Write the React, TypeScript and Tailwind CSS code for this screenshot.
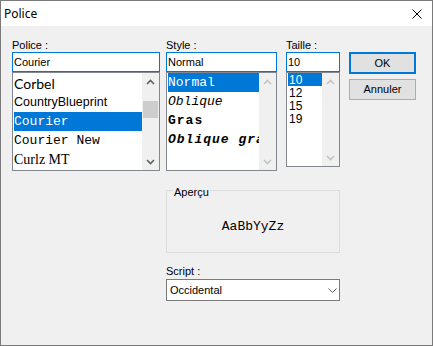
import React from "react";

const Chevron = ({ up, enabled }: { up?: boolean; enabled?: boolean }) => (
  <svg width="9" height="6" viewBox="0 0 9 6">
    <path
      d={up ? "M1 5 L4.5 1.5 L8 5" : "M1 1 L4.5 4.5 L8 1"}
      fill="none"
      stroke={enabled ? "#606060" : "#c4c4c4"}
      strokeWidth="1.6"
    />
  </svg>
);

const ScrollBar = ({ enabled, thumb }: { enabled?: boolean; thumb?: boolean }) => (
  <div className="flex w-[17px] shrink-0 flex-col bg-[#f0f0f0]">
    <div className="flex h-[17px] items-center justify-center">
      <Chevron up enabled={enabled} />
    </div>
    <div className="flex-1">
      {thumb && <div className="mx-[1px] mt-[11px] h-[17px] bg-[#cdcdcd]" />}
    </div>
    <div className="flex h-[17px] items-center justify-center">
      <Chevron enabled={enabled} />
    </div>
  </div>
);

const TextBox = ({ value }: { value: string }) => (
  <div className="flex h-[20px] items-center border border-[#0078d7] bg-white px-[1px]">
    {value}
  </div>
);

const fonts = [
  { name: "Corbel", cls: "font-['Lato',sans-serif] text-[14px]" },
  { name: "CountryBlueprint", cls: "font-['Liberation_Sans',sans-serif] text-[12.5px]" },
  { name: "Courier", cls: "font-['Liberation_Mono',monospace] text-[13px]", selected: true },
  { name: "Courier New", cls: "font-['Liberation_Mono',monospace] text-[13px]" },
  { name: "Curlz MT", cls: "font-['Liberation_Serif',serif] text-[14px]" },
];

const styles = [
  { name: "Normal", cls: "", selected: true },
  { name: "Oblique", cls: "italic" },
  { name: "Gras", cls: "font-bold tracking-[1px]" },
  { name: "Oblique gras", cls: "italic font-bold tracking-[1px]" },
];

const sizes = ["10", "12", "15", "19"];

export default function App() {
  return (
    <div className="flex h-[346px] w-[433px] flex-col overflow-hidden border border-[#7a7a7a] bg-[#f0f0f0] font-['Liberation_Sans',sans-serif] text-[11px] text-black">
      <div className="flex h-[25px] shrink-0 items-center justify-between bg-white pl-[3px] pr-[10px]">
        <span className="font-['Segoe_UI','Noto_Sans',sans-serif] text-[12px]">Police</span>
        <svg width="10" height="10" viewBox="0 0 10 10">
          <path d="M0.5 0.5 L9.5 9.5 M9.5 0.5 L0.5 9.5" stroke="#000" strokeWidth="1" />
        </svg>
      </div>

      <div className="flex flex-col pl-[11px] pt-[12px]">
        <div className="flex">
          {/* Police */}
          <div className="flex w-[148px] flex-col">
            <div className="h-[14px] leading-[14px]">Police :</div>
            <TextBox value="Courier" />
            <div className="flex h-[99px] border border-[#828790] bg-white">
              <div className="flex-1 overflow-hidden pl-[1px] pt-[1px]">
                {fonts.map((f) => (
                  <div
                    key={f.name}
                    className={`flex h-[19px] items-center whitespace-nowrap ${f.cls} ${
                      f.selected ? "bg-[#0078d7] text-white" : ""
                    }`}
                  >
                    {f.name}
                  </div>
                ))}
              </div>
              <ScrollBar enabled thumb />
            </div>
          </div>

          {/* Style */}
          <div className="ml-[6px] flex w-[111px] flex-col">
            <div className="h-[14px] leading-[14px]">Style :</div>
            <TextBox value="Normal" />
            <div className="flex h-[99px] border border-[#828790] bg-white">
              <div className="min-w-0 flex-1 overflow-hidden pl-[1px]">
                {styles.map((s) => (
                  <div
                    key={s.name}
                    className={`flex h-[19px] items-center overflow-hidden whitespace-nowrap font-['Liberation_Mono',monospace] text-[13px] ${s.cls} ${
                      s.selected ? "bg-[#0078d7] text-white" : ""
                    }`}
                  >
                    {s.name}
                  </div>
                ))}
              </div>
              <ScrollBar />
            </div>
          </div>

          {/* Taille */}
          <div className="ml-[9px] flex w-[54px] flex-col">
            <div className="h-[14px] leading-[14px]">Taille :</div>
            <TextBox value="10" />
            <div className="flex h-[95px] border border-[#828790] bg-white">
              <div className="flex-1 overflow-hidden pl-[1px]">
                {sizes.map((s, i) => (
                  <div
                    key={s}
                    className={`flex h-[13px] items-center pl-[1px] text-[12px] ${
                      i === 0 ? "bg-[#0078d7] text-white" : ""
                    }`}
                  >
                    {s}
                  </div>
                ))}
              </div>
              <ScrollBar />
            </div>
          </div>

          {/* Buttons */}
          <div className="ml-[9px] flex w-[67px] flex-col pt-[14px]">
            <button className="flex h-[22px] items-center justify-center border-2 border-[#0078d7] bg-[#e1e1e1] text-[11px]">
              OK
            </button>
            <button className="mt-[5px] flex h-[21px] items-center justify-center border border-[#adadad] bg-[#e1e1e1] text-[11px]">
              Annuler
            </button>
          </div>
        </div>

        <div className="ml-[154px] flex w-[174px] flex-col">
          <div className="relative mt-[19px] flex h-[63px] items-center justify-center border border-[#dcdcdc] pt-[10px]">
            <span className="absolute -top-[5px] left-[6px] bg-[#f0f0f0] px-[1px] leading-[13px]">
              Aperçu
            </span>
            <span className="font-['Liberation_Mono',monospace] text-[13px]">AaBbYyZz</span>
          </div>
          <div className="mt-[12px] h-[13px] leading-[13px]">Script :</div>
          <div className="mt-[1px] flex h-[22px] items-center justify-between border border-[#7a7a7a] bg-white pl-[3px] pr-[2px]">
            <span>Occidental</span>
            <svg width="9" height="5" viewBox="0 0 9 5">
              <path d="M0.5 0.5 L4.5 4.5 L8.5 0.5" fill="none" stroke="#606060" strokeWidth="1" />
            </svg>
          </div>
        </div>
      </div>
    </div>
  );
}
